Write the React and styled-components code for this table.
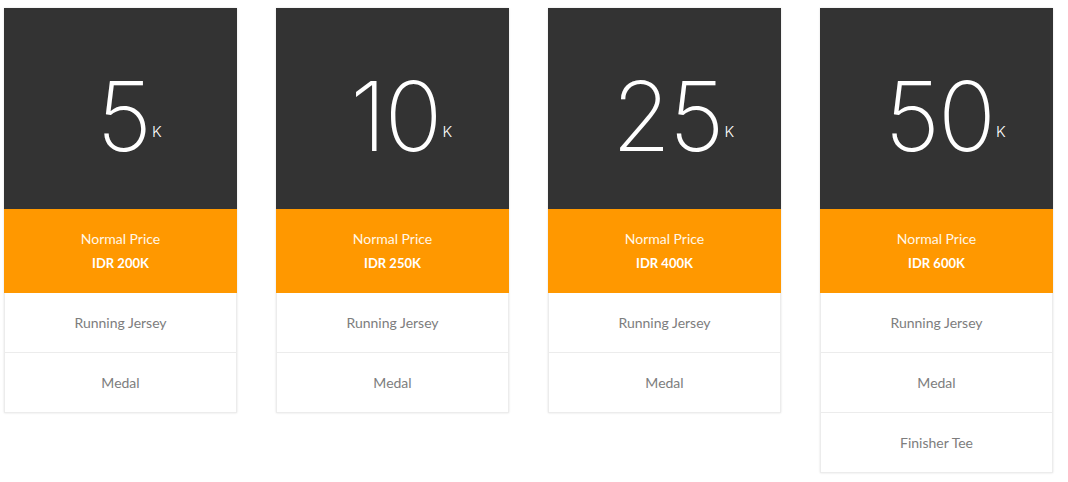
import styled, { createGlobalStyle } from "styled-components";

const GlobalStyle = createGlobalStyle`
    body {
        margin: 0;
        background: #fff;
        font-family: Lato, "Open Sans", sans-serif;
    }
`

const Container = styled.div`
    display: grid;
    grid-template-columns: repeat(4, 233px);
    column-gap: 39px;
    align-items: start;
    padding: 8px 4px;
`
const Card = styled.div`
    display: flex;
    flex-direction: column;
    box-shadow: 0 0 2px rgba(0, 0, 0, 0.12);
`
const Head = styled.div`
    height: 201px;
    background-color: #333333;
    color: #fff;
    display: flex;
    align-items: center;
    justify-content: center;
`
const Distance = styled.div`
    font-family: Inter, sans-serif;
    font-weight: 200;
    font-size: 96px;
    line-height: 1;
    letter-spacing: -2px;
    padding-top: 14px;
    padding-left: 6px;
`
const Unit = styled.span`
    font-family: Inter, sans-serif;
    font-weight: 300;
    font-size: 15px;
    letter-spacing: 0;
    vertical-align: 14px;
    margin-left: 2px;
    margin-right: -11px;
`
const Price = styled.div`
    height: 84px;
    background-color: #ff9800;
    color: #fff;
    display: flex;
    flex-direction: column;
    align-items: center;
    justify-content: center;
    gap: 8px;
    padding-bottom: 2px;
    box-sizing: border-box;
`
const PriceLabel = styled.div`
    font-size: 14px;
    color: #fff7e8;
`
const PriceValue = styled.div`
    font-size: 13px;
    font-weight: 700;
`
const Item = styled.div`
    height: 60px;
    display: flex;
    align-items: center;
    justify-content: center;
    background: #fff;
    border: 1px solid #ececec;
    border-top: none;
    box-sizing: border-box;
    font-size: 14px;
    color: #7d7d7d;
`

const races = [
  { km: "5", price: "IDR 200K", items: ["Running Jersey", "Medal"] },
  { km: "10", price: "IDR 250K", items: ["Running Jersey", "Medal"] },
  { km: "25", price: "IDR 400K", items: ["Running Jersey", "Medal"] },
  { km: "50", price: "IDR 600K", items: ["Running Jersey", "Medal", "Finisher Tee"] },
]

const App = () => {
  return (
    <>
      <GlobalStyle />
      <Container>
        {races.map((race) => (
          <Card key={race.km}>
            <Head>
              <Distance>{race.km}<Unit>K</Unit></Distance>
            </Head>
            <Price>
              <PriceLabel>Normal Price</PriceLabel>
              <PriceValue>{race.price}</PriceValue>
            </Price>
            {race.items.map((item) => (
              <Item key={item}>{item}</Item>
            ))}
          </Card>
        ))}
      </Container>
    </>
  )
}

export default App
